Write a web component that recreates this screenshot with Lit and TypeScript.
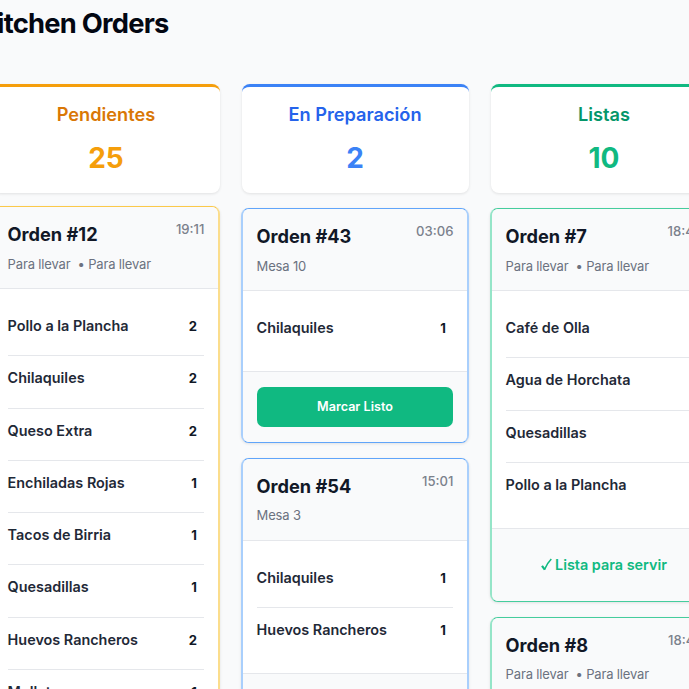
import { customElement, property } from 'lit/decorators.js';
import { css, html, LitElement, nothing } from 'lit';
import { classMap } from 'lit/directives/class-map.js';

type Status = 'pending' | 'preparing' | 'ready';

interface OrderItem {
  name: string;
  quantity: number;
}

interface Order {
  id: number;
  time: string;
  place: string;
  customer?: string;
  items: OrderItem[];
}

interface Column {
  status: Status;
  title: string;
  count: number;
  orders: Order[];
}

const COLUMNS: Column[] = [
  {
    status: 'pending',
    title: 'Pendientes',
    count: 25,
    orders: [
      {
        id: 12,
        time: '19:11',
        place: 'Para llevar',
        customer: 'Para llevar',
        items: [
          { name: 'Pollo a la Plancha', quantity: 2 },
          { name: 'Chilaquiles', quantity: 2 },
          { name: 'Queso Extra', quantity: 2 },
          { name: 'Enchiladas Rojas', quantity: 1 },
          { name: 'Tacos de Birria', quantity: 1 },
          { name: 'Quesadillas', quantity: 1 },
          { name: 'Huevos Rancheros', quantity: 2 },
          { name: 'Molletes', quantity: 1 },
        ],
      },
    ],
  },
  {
    status: 'preparing',
    title: 'En Preparación',
    count: 2,
    orders: [
      {
        id: 43,
        time: '03:06',
        place: 'Mesa 10',
        items: [{ name: 'Chilaquiles', quantity: 1 }],
      },
      {
        id: 54,
        time: '15:01',
        place: 'Mesa 3',
        items: [
          { name: 'Chilaquiles', quantity: 1 },
          { name: 'Huevos Rancheros', quantity: 1 },
        ],
      },
    ],
  },
  {
    status: 'ready',
    title: 'Listas',
    count: 10,
    orders: [
      {
        id: 7,
        time: '18:44',
        place: 'Para llevar',
        customer: 'Para llevar',
        items: [
          { name: 'Café de Olla', quantity: 1 },
          { name: 'Agua de Horchata', quantity: 1 },
          { name: 'Quesadillas', quantity: 1 },
          { name: 'Pollo a la Plancha', quantity: 1 },
        ],
      },
      {
        id: 8,
        time: '18:45',
        place: 'Para llevar',
        customer: 'Para llevar',
        items: [{ name: 'Café de Olla', quantity: 1 }],
      },
    ],
  },
];

@customElement('order-card')
export class OrderCard extends LitElement {
  @property({ attribute: false })
  order!: Order;

  @property()
  status: Status = 'pending';

  static styles = css`
    :host {
      display: block;
    }

    .card {
      background: #fff;
      border: solid;
      border-width: 1px 2px;
      border-radius: 8px;
      box-shadow: 0 1px 3px rgba(0, 0, 0, 0.1);
      overflow: hidden;
    }

    .card--pending {
      border-color: #fbc94a #fbdd8c;
    }

    .card--preparing {
      border-color: #60a5fa #a9cffc;
    }

    .card--ready {
      border-color: #45cd9d #95e5c8;
    }

    .header {
      background: #f9fafb;
      border-bottom: 1px solid #e5e7eb;
      box-sizing: border-box;
      height: 82px;
      padding: 13px 13.6px 0;
    }

    .heading {
      display: flex;
      justify-content: space-between;
    }

    .title {
      color: #111827;
      font-size: 18.2px;
      font-weight: 650;
      line-height: 28px;
      margin: 0;
    }

    .time {
      color: #7b818c;
      font-size: 13.1px;
      font-weight: 500;
      line-height: 18px;
    }

    .meta {
      color: #6b7280;
      display: flex;
      font-size: 13px;
      gap: 4px;
      letter-spacing: -0.15px;
      line-height: 18px;
      margin-top: 6.5px;
    }

    .customer {
      margin-left: 3px;
    }

    .items {
      list-style: none;
      margin: 0;
      padding: 15px 13.6px 12.7px;
    }

    .item {
      align-items: center;
      border-bottom: 1px solid #e5e7eb;
      box-sizing: border-box;
      color: #1f2937;
      display: flex;
      font-size: 14.4px;
      font-weight: 600;
      height: 52.25px;
      justify-content: space-between;
      line-height: 22px;
      padding-bottom: 7px;
    }

    .item:last-child {
      border-bottom-color: transparent;
    }

    .quantity {
      color: #111827;
      font-size: 13.1px;
      font-weight: 700;
      padding: 0 7.4px 0 7px;
    }

    .footer {
      background: #f9fafb;
      border-top: 1px solid #e5e7eb;
      padding: 15px 13.6px;
    }

    .action {
      background: #10b981;
      border: none;
      border-radius: 7px;
      color: #fff;
      display: block;
      font: 600 12.6px/18px Inter, sans-serif;
      height: 40px;
      padding: 0;
      width: 100%;
    }

    .done {
      align-items: center;
      color: #10b981;
      display: flex;
      font-size: 14.4px;
      font-weight: 600;
      gap: 3px;
      height: 42px;
      justify-content: center;
    }

    .check {
      fill: none;
      height: 13px;
      stroke: currentColor;
      width: 11px;
    }
  `;

  renderFooter() {
    if (this.status === 'ready') {
      return html`
        <div class="done">
          <svg class="check" viewBox="0 0 11 13" aria-hidden="true">
            <path d="M1 7.8 L3.8 11.6" stroke-width="2.2" />
            <path d="M3.4 11.8 C5 8 7 4.2 10.3 1" stroke-width="1.6" />
          </svg>
          <span>Lista para servir</span>
        </div>
      `;
    }
    const label = this.status === 'pending' ? 'Iniciar' : 'Marcar Listo';
    return html`<button class="action">${label}</button>`;
  }

  render() {
    const { id, time, place, customer, items } = this.order;
    return html`
      <article class=${classMap({ card: true, [`card--${this.status}`]: true })}>
        <header class="header">
          <div class="heading">
            <h3 class="title">Orden #${id}</h3>
            <span class="time">${time}</span>
          </div>
          <div class="meta">
            <span>${place}</span>
            ${customer ? html`<span class="customer">• ${customer}</span>` : nothing}
          </div>
        </header>
        <ul class="items">
          ${items.map(
            (item) => html`
              <li class="item">
                <span>${item.name}</span>
                <span class="quantity">${item.quantity}</span>
              </li>
            `
          )}
        </ul>
        <footer class="footer">${this.renderFooter()}</footer>
      </article>
    `;
  }
}

@customElement('app-root')
export class AppRoot extends LitElement {
  static styles = css`
    :host {
      background: #f9fafb;
      display: block;
      font-family: Inter, sans-serif;
      height: 100vh;
      overflow: hidden;
    }

    .page-title {
      color: #030712;
      font-size: 27.3px;
      font-weight: 650;
      letter-spacing: -0.75px;
      line-height: 36px;
      margin: 0 0 0 -22px;
      padding-top: 6px;
      white-space: nowrap;
    }

    .board {
      align-items: start;
      display: grid;
      gap: 21px;
      grid-template-columns: repeat(3, 228px);
      margin: 42px 0 0 -8px;
    }

    .summary {
      background: #fff;
      border-radius: 8px;
      border-top: 3px solid;
      box-shadow: 0 1px 3px rgba(0, 0, 0, 0.1);
      box-sizing: border-box;
      height: 109px;
      margin: 0 0.5px;
      padding-top: 13px;
      text-align: center;
    }

    .summary-title {
      font-size: 18.2px;
      font-weight: 600;
      line-height: 28px;
      margin: 0;
    }

    .summary-count {
      font-size: 28px;
      font-weight: 700;
      line-height: 34px;
      margin-top: 13px;
    }

    .summary--pending {
      border-color: #f59e0b;
    }

    .summary--pending .summary-title {
      color: #d97706;
    }

    .summary--pending .summary-count {
      color: #f59e0b;
    }

    .summary--preparing {
      border-color: #3b82f6;
    }

    .summary--preparing .summary-title {
      color: #2563eb;
    }

    .summary--preparing .summary-count {
      color: #3b82f6;
    }

    .summary--ready {
      border-color: #10b981;
    }

    .summary--ready .summary-title {
      color: #059669;
    }

    .summary--ready .summary-count {
      color: #10b981;
    }

    .orders {
      display: grid;
      gap: 15px;
      margin-top: 15px;
    }

    .orders--pending {
      margin-top: 13px;
    }
  `;

  renderColumn({ status, title, count, orders }: Column) {
    return html`
      <section>
        <div class=${classMap({ summary: true, [`summary--${status}`]: true })}>
          <h2 class="summary-title">${title}</h2>
          <div class="summary-count">${count}</div>
        </div>
        <div class=${classMap({ orders: true, [`orders--${status}`]: true })}>
          ${orders.map(
            (order) => html`<order-card .order=${order} status=${status}></order-card>`
          )}
        </div>
      </section>
    `;
  }

  render() {
    return html`
      <h1 class="page-title">Kitchen Orders</h1>
      <main class="board">${COLUMNS.map((column) => this.renderColumn(column))}</main>
    `;
  }
}
